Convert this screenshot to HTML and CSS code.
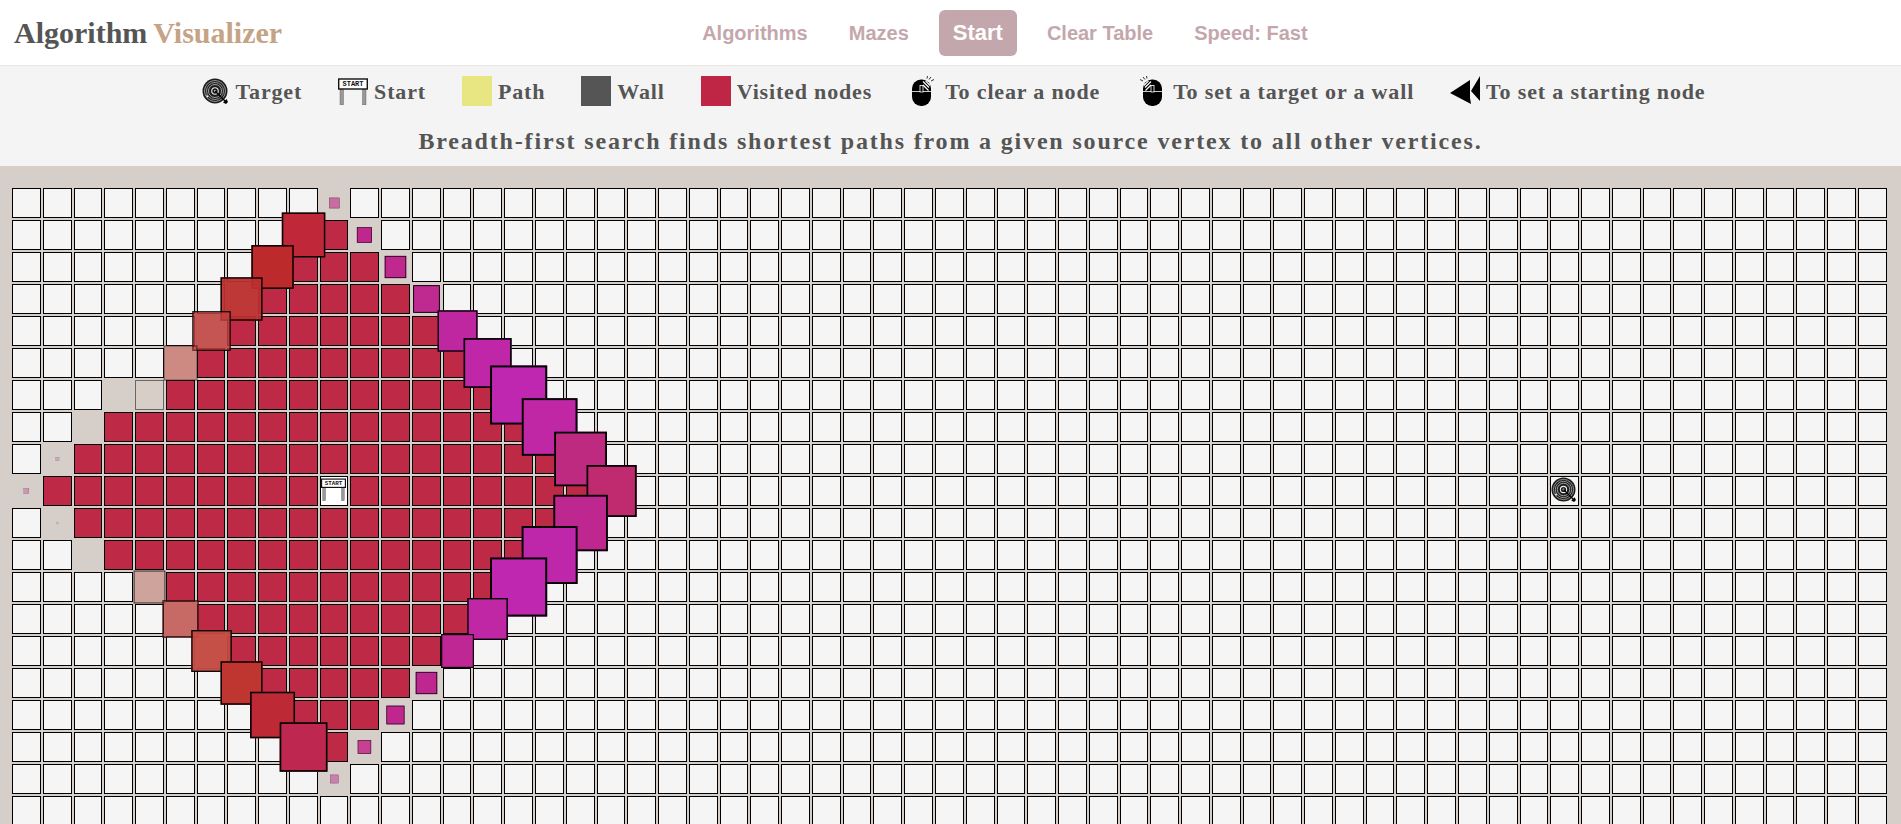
FILE: index.html
```html
<!DOCTYPE html>
<html lang="en">
<head>
    <meta charset="UTF-8">
    <meta name="viewport" content="width=device-width, initial-scale=1.0">
    <title>Algorithm Visualizer</title>
    <link rel="stylesheet" href="styles.css">
</head>
<body>
    <svg class="sprites" aria-hidden="true">
        <symbol id="icon-target" viewBox="0 0 26 26">
            <circle cx="13" cy="13" r="12.500" fill="#1c1c1c"/>
            <circle cx="13" cy="13" r="10.500" fill="none" stroke="#a0a0a0" stroke-width=".9"/>
            <circle cx="13" cy="13" r="8.500" fill="none" stroke="#a0a0a0" stroke-width=".9"/>
            <circle cx="13" cy="13" r="6.500" fill="none" stroke="#b0b0b0" stroke-width=".9"/>
            <circle cx="13" cy="13" r="3.800" fill="#eee"/>
            <circle cx="13" cy="13" r="2.700" fill="#1c1c1c"/>
            <circle cx="13" cy="13" r="1" fill="#ddd"/>
            <path d="M13 13L23 23" stroke="#000" stroke-width="1.200"/>
            <path d="M21 24.500L24.500 21L26 24L24 26Z" fill="#000"/>
            <path d="M4.500 17.500l1.500 1.500" stroke="#fff" stroke-width="1.200"/>
        </symbol>
        <symbol id="icon-mouse-right" viewBox="0 0 22 30">
            <rect x="0" y="3.500" width="19" height="26.500" rx="9" fill="#000"/>
            <path d="M11 5.500L17 11.500M11 9L16.500 14.500M13.500 4.800L18 9.500" stroke="#fff" stroke-width="1.200"/>
            <path d="M0 15.500H19" stroke="#fff" stroke-width=".8"/>
            <rect x="8" y="9.500" width="3" height="6.500" fill="#000" stroke="#fff" stroke-width=".8"/>
            <path d="M17 3.500L19 1M19 5L22 3.500M15 2.500L15.500 0" stroke="#333" stroke-width="1"/>
        </symbol>
        <symbol id="icon-mouse-left" viewBox="0 0 22 30">
            <rect x="3" y="3.500" width="19" height="26.500" rx="9" fill="#000"/>
            <path d="M11 5.500L5 11.500M11 9L5.500 14.500M8.500 4.800L4 9.500" stroke="#fff" stroke-width="1.200"/>
            <path d="M3 15.500H22" stroke="#fff" stroke-width=".8"/>
            <rect x="11" y="9.500" width="3" height="6.500" fill="#000" stroke="#fff" stroke-width=".8"/>
            <path d="M5 3.500L3 1M3 5L0 3.500M7 2.500L6.500 0" stroke="#333" stroke-width="1"/>
        </symbol>
        <symbol id="icon-rewind" viewBox="0 0 30 30">
            <polygon points="0,17 20,4 20,22 21,28"/>
            <polygon points="30,0 30,25 21,15"/>
        </symbol>
    </svg>

    <header class="topbar">
        <h1 class="brand">Algorithm <span class="brand-accent">Visualizer</span></h1>
        <nav class="menu">
            <a class="menu-item">Algorithms</a>
            <a class="menu-item">Mazes</a>
            <a class="menu-item menu-item-active">Start</a>
            <a class="menu-item">Clear Table</a>
            <a class="menu-item">Speed: Fast</a>
        </nav>
    </header>

    <section class="info">
        <ul class="legend">
            <li class="legend-item"><svg class="icon icon-target"><use href="#icon-target"/></svg><span class="legend-label">Target</span></li>
            <li class="legend-item">
                <svg class="icon icon-start" id="startIcon" viewBox="0 0 30 27">
                    <rect x="2" y="9" width="3.500" height="18" fill="#999" stroke="#555" stroke-width=".4"/>
                    <rect x="24.500" y="9" width="3.500" height="18" fill="#999" stroke="#555" stroke-width=".4"/>
                    <rect x=".7" y="1" width="28.600" height="10" fill="#fff" stroke="#111" stroke-width="1.400"/>
                    <text x="15" y="8.200" text-anchor="middle" class="sign-text">START</text>
                </svg>
                <span class="legend-label">Start</span>
            </li>
            <li class="legend-item"><span class="swatch swatch-path"></span><span class="legend-label">Path</span></li>
            <li class="legend-item"><span class="swatch swatch-wall"></span><span class="legend-label">Wall</span></li>
            <li class="legend-item"><span class="swatch swatch-visited"></span><span class="legend-label">Visited nodes</span></li>
            <li class="legend-item"><svg class="icon icon-mouse"><use href="#icon-mouse-right"/></svg><span class="legend-label">To clear a node</span></li>
            <li class="legend-item"><svg class="icon icon-mouse"><use href="#icon-mouse-left"/></svg><span class="legend-label">To set a target or a wall</span></li>
            <li class="legend-item"><svg class="icon icon-rewind"><use href="#icon-rewind"/></svg><span class="legend-label">To set a starting node</span></li>
        </ul>
        <p class="description">Breadth-first search finds shortest paths from a given source vertex to all other vertices.</p>
    </section>

    <main class="board">
        <table class="grid"><tbody id="grid"></tbody></table>
    </main>

    <script src="script.js"></script>
</body>
</html>
```

FILE: styles.css
```css
* {
    box-sizing: border-box;
}
html, body {
    height: 100%;
}
body {
    margin: 0;
    overflow: hidden;
    background-color: #d6cec8;
    color: #555;
    font-family: "Liberation Serif", "Times New Roman", serif;
}
.sprites {
    position: absolute;
    width: 0;
    height: 0;
}
.sign-text {
    font-family: "Liberation Mono", monospace;
    font-size: 7px;
    font-weight: bold;
    letter-spacing: 0;
    fill: #111;
}
.topbar {
    display: flex;
    align-items: center;
    height: 66px;
    padding-left: 14px;
    background-color: #fff;
    border-bottom: 1px solid #ece6e0;
}
.brand {
    margin: 0;
    font-size: 30px;
    font-weight: bold;
    word-spacing: -1px;
    color: #555;
    white-space: pre;
}
.brand-accent {
    color: #c4a484;
}
.menu {
    display: flex;
    align-items: center;
    gap: 13px;
    margin-left: 406px;
}
.menu-item {
    padding: 13px 14px;
    border-radius: 6px;
    font-family: "Liberation Sans", Arial, sans-serif;
    font-size: 20px;
    font-weight: bold;
    line-height: 20px;
    color: #c4a7ac;
}
.menu-item-active {
    margin: 0 3px;
    background-color: #c4a7ac;
    font-size: 22px;
    color: #fff;
}
.info {
    height: 100px;
    background-color: #f4f4f4;
}
.legend {
    display: flex;
    justify-content: center;
    gap: 36px;
    height: 30px;
    margin: 0;
    padding: 10px 0 0 4px;
    list-style: none;
    box-sizing: content-box;
}
.legend-item {
    display: flex;
    align-items: center;
    gap: 6px;
    font-size: 22px;
    font-weight: bold;
    letter-spacing: .84px;
}
.legend-label {
    padding-top: 2px;
}
.icon {
    display: block;
    flex: none;
    fill: #000;
}
.icon-target {
    width: 26px;
    height: 26px;
    margin: 0 2px;
}
.icon-start {
    width: 30px;
    height: 27px;
}
.icon-mouse {
    width: 22px;
    height: 30px;
    margin: 0 5px 0 4px;
}
.icon-rewind {
    width: 30px;
    height: 30px;
}
.swatch {
    display: block;
    flex: none;
    width: 30px;
    height: 30px;
}
.swatch-path {
    background-color: #e8e682;
}
.swatch-wall {
    background-color: #555;
}
.swatch-visited {
    background-color: #bf2544;
}
.description {
    margin: 21px 0 0;
    font-size: 24px;
    font-weight: bold;
    letter-spacing: 1.830px;
    line-height: 28px;
    text-align: center;
}
.board {
    padding: 20px 12px 0 10px;
}
.grid {
    width: 100%;
    table-layout: fixed;
    border-collapse: separate;
    border-spacing: 2px;
}
.cell {
    height: 30px;
    padding: 0;
    background-color: #f5f5f5;
    border: 1px solid #000;
    vertical-align: top;
}
.cell .icon {
    width: 25px;
    height: 25px;
    margin: 0;
}
.cell-visited {
    background-color: #be2945;
}
.cell-start {
    background-color: #fff;
}
```

FILE: script.js
```js
var ROWS = 21;
var COLS = 61;
var START = { col: 10, row: 9 };
var TARGET = { col: 50, row: 9 };

// cells still animating: col, row, scale, colour, opacity
var frontier = [
    [10, 0, 0.35, '#c8539b', 0.8],
    [9, 1, 1.5, '#c0283a', 1],
    [11, 1, 0.52, '#c0278d', 1],
    [8, 2, 1.46, '#bd2a2c', 1],
    [12, 2, 0.74, '#c0278f', 1],
    [7, 3, 1.45, '#bc3030', 0.95],
    [13, 3, 0.92, '#bf2a90', 1],
    [6, 4, 1.33, '#c2403e', 0.85],
    [14, 4, 1.38, '#bf27a0', 1],
    [5, 5, 1.17, '#c4483f', 0.5],
    [15, 5, 1.66, '#bf27a8', 1],
    [3, 6, 0, '#d6cec8', 0],
    [4, 6, 1, '#d8cec8', 0.5],
    [16, 6, 1.97, '#bf27b0', 1],
    [2, 7, 0, '#d6cec8', 0],
    [17, 7, 1.92, '#c027a5', 1],
    [1, 8, 0.13, '#c990a8', 0.6],
    [18, 8, 1.82, '#be2a80', 1],
    [0, 9, 0.18, '#cf7ba8', 0.7],
    [19, 9, 1.73, '#c02a6e', 1],
    [1, 10, 0.07, '#c990a8', 0.5],
    [18, 10, 1.88, '#bf2790', 1],
    [2, 11, 0, '#d6cec8', 0],
    [17, 11, 1.93, '#bf27aa', 1],
    [4, 12, 1.1, '#cb918a', 0.7],
    [16, 12, 1.97, '#bf27b0', 1],
    [5, 13, 1.25, '#c4514d', 0.8],
    [15, 13, 1.4, '#bf27a5', 1],
    [6, 14, 1.4, '#c54a42', 0.95],
    [14, 14, 1.13, '#bf2795', 1],
    [7, 15, 1.45, '#bf3530', 1],
    [13, 15, 0.74, '#bf2790', 1],
    [8, 16, 1.55, '#bd2a35', 1],
    [12, 16, 0.62, '#bf278e', 1],
    [9, 17, 1.65, '#be2850', 1],
    [11, 17, 0.46, '#c63a92', 0.95],
    [10, 18, 0.28, '#cc6ba8', 0.8]
];

function isVisited(col, row) {
    var dist = Math.abs(col - START.col) + Math.abs(row - START.row);
    if (dist < 9) return true;
    if (dist > 9) return false;
    return col <= 3 && row >= 7 && row <= 11;
}

var grid = document.getElementById('grid');
for (var row = 0; row < ROWS; row++) {
    var tr = document.createElement('tr');
    for (var col = 0; col < COLS; col++) {
        var td = document.createElement('td');
        td.className = 'cell';
        td.id = 'cell-' + col + '-' + row;
        if (col === START.col && row === START.row) {
            td.classList.add('cell-start');
            var sign = document.getElementById('startIcon').cloneNode(true);
            sign.removeAttribute('id');
            td.appendChild(sign);
        } else if (col === TARGET.col && row === TARGET.row) {
            td.innerHTML = '<svg class="icon"><use href="#icon-target"/></svg>';
        } else if (isVisited(col, row)) {
            td.classList.add('cell-visited');
        }
        tr.appendChild(td);
    }
    grid.appendChild(tr);
}

frontier.forEach(function (node) {
    var td = document.getElementById('cell-' + node[0] + '-' + node[1]);
    td.style.transform = 'scale(' + node[2] + ')';
    td.style.backgroundColor = node[3];
    td.style.opacity = node[4];
});
```
